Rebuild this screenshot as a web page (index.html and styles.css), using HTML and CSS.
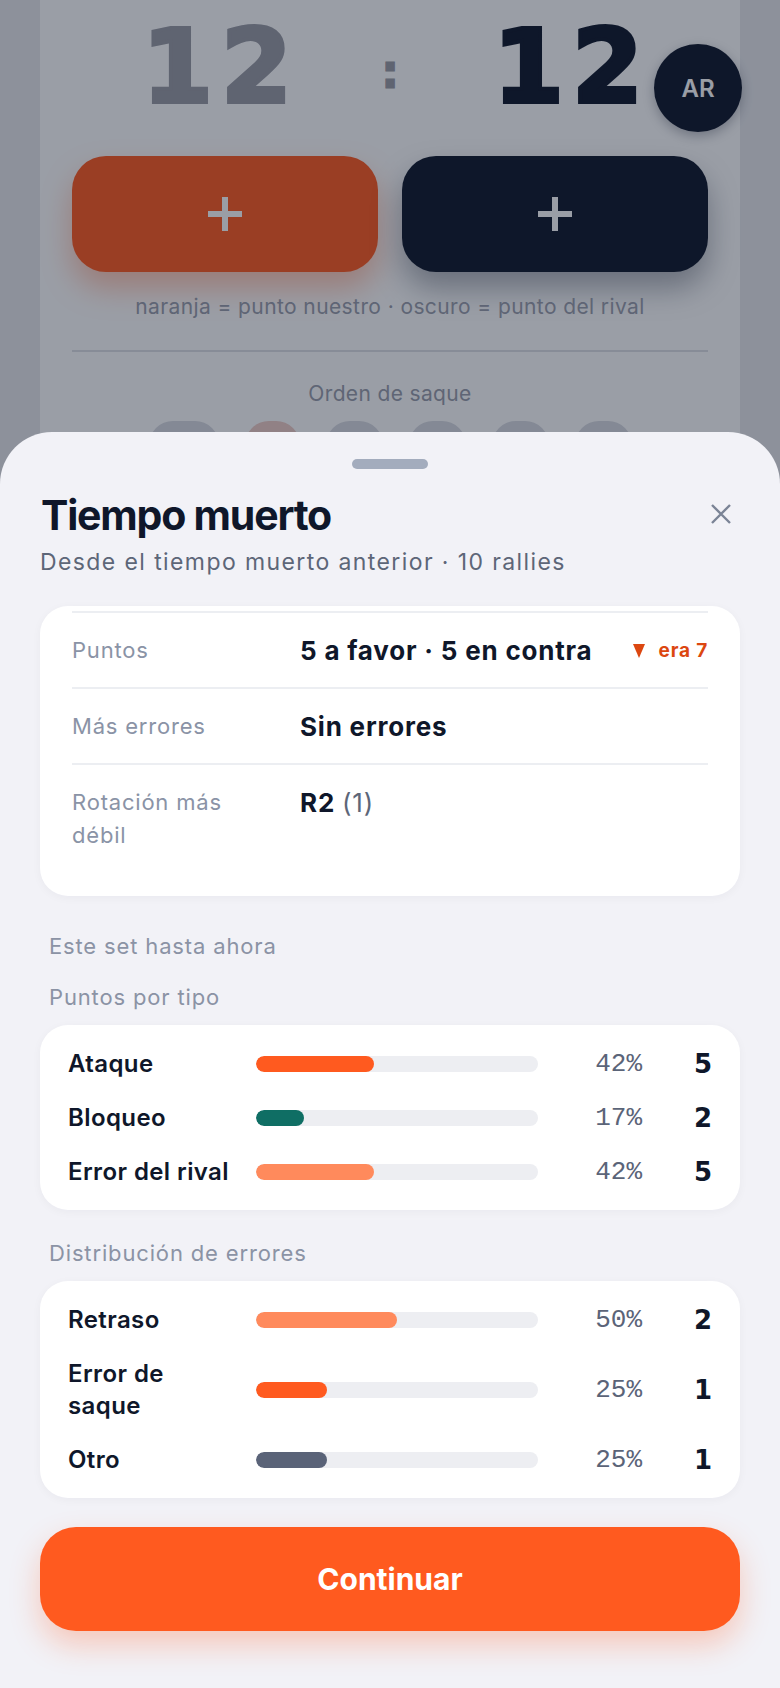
FILE: index.html
```html
<!DOCTYPE html>
<html lang="es">
<head>
    <meta charset="UTF-8">
    <meta name="viewport" content="width=device-width, initial-scale=1.0">
    <title>Tiempo muerto</title>
    <link rel="stylesheet" href="styles.css">
</head>
<body>
    <div class="app">
        <div class="board">
            <div class="score">
                <span class="score-num ours">12</span>
                <span class="colon">:</span>
                <span class="score-num theirs">12</span>
                <span class="badge">AR</span>
            </div>

            <div class="point-btns">
                <button class="point ours">
                    <svg viewBox="0 0 40 40" width="40" height="40"><path d="M20 3v34M3 20h34"/></svg>
                </button>
                <button class="point theirs">
                    <svg viewBox="0 0 40 40" width="40" height="40"><path d="M20 3v34M3 20h34"/></svg>
                </button>
            </div>
            <p class="hint">naranja = punto nuestro · oscuro = punto del rival</p>

            <div class="divider"></div>

            <p class="hint serve-label">Orden de saque</p>
            <div class="serve-order">
                <span class="pill wide"></span>
                <span class="pill active"></span>
                <span class="pill"></span>
                <span class="pill"></span>
                <span class="pill"></span>
                <span class="pill"></span>
            </div>
        </div>

        <div class="scrim"></div>

        <section class="sheet">
            <div class="handle"></div>
            <div class="sheet-head">
                <h2 class="title">Tiempo muerto</h2>
                <button class="close" aria-label="Cerrar">
                    <svg viewBox="0 0 22 22" width="22" height="22"><path d="M2 2l18 18M20 2L2 20"/></svg>
                </button>
            </div>
            <p class="subtitle">Desde el tiempo muerto anterior · 10 rallies</p>

            <div class="card summary">
                <div class="summary-row">
                    <span class="label">Puntos</span>
                    <span class="value">5 a favor · 5 en contra</span>
                    <span class="delta">
                        <svg viewBox="0 0 12 14" width="12" height="14"><path d="M0 0h12L6 14z"/></svg>
                        era 7
                    </span>
                </div>
                <div class="summary-row">
                    <span class="label">Más errores</span>
                    <span class="value">Sin errores</span>
                </div>
                <div class="summary-row">
                    <span class="label">Rotación más débil</span>
                    <span class="value">R2 <span class="muted">(1)</span></span>
                </div>
            </div>

            <p class="section-label first">Este set hasta ahora</p>
            <p class="section-label">Puntos por tipo</p>
            <div class="card bars">
                <div class="bar-row">
                    <span class="bar-label">Ataque</span>
                    <div class="track"><div class="fill attack" style="width: 42%"></div></div>
                    <span class="pct">42%</span>
                    <span class="count">5</span>
                </div>
                <div class="bar-row">
                    <span class="bar-label">Bloqueo</span>
                    <div class="track"><div class="fill block" style="width: 17%"></div></div>
                    <span class="pct">17%</span>
                    <span class="count">2</span>
                </div>
                <div class="bar-row">
                    <span class="bar-label">Error del rival</span>
                    <div class="track"><div class="fill soft" style="width: 42%"></div></div>
                    <span class="pct">42%</span>
                    <span class="count">5</span>
                </div>
            </div>

            <p class="section-label gap">Distribución de errores</p>
            <div class="card bars">
                <div class="bar-row">
                    <span class="bar-label">Retraso</span>
                    <div class="track"><div class="fill soft" style="width: 50%"></div></div>
                    <span class="pct">50%</span>
                    <span class="count">2</span>
                </div>
                <div class="bar-row">
                    <span class="bar-label">Error de saque</span>
                    <div class="track"><div class="fill attack" style="width: 25%"></div></div>
                    <span class="pct">25%</span>
                    <span class="count">1</span>
                </div>
                <div class="bar-row">
                    <span class="bar-label">Otro</span>
                    <div class="track"><div class="fill other" style="width: 25%"></div></div>
                    <span class="pct">25%</span>
                    <span class="count">1</span>
                </div>
            </div>

            <button class="continue">Continuar</button>
        </section>
    </div>
</body>
</html>
```

FILE: styles.css
```css
body {
    margin: 0;
    font-family: Inter, "Noto Sans", sans-serif;
    background-color: #e8e9ed;
    color: #0f172a;
}
.app {
    position: relative;
    width: 780px;
    height: 1688px;
    overflow: hidden;
}

/* match screen underneath */
.board {
    margin: 0 40px;
    padding: 6px 32px 0;
    height: 1688px;
    background: #ffffff;
}
.score {
    position: relative;
    display: grid;
    grid-template-columns: 1fr 40px 1fr;
    align-items: start;
    justify-items: center;
}
.score-num {
    font-family: "DejaVu Sans", sans-serif;
    font-weight: bold;
    font-size: 102px;
    line-height: 122px;
    letter-spacing: 8px;
    color: #0f172a;
    -webkit-text-stroke: 4px #0f172a;
}
.score-num.ours {
    color: #9a9ba4;
    -webkit-text-stroke-color: #9a9ba4;
}
.score-num.theirs {
    margin-left: 26px;
}
.colon {
    margin-top: 41px;
    font-family: "DejaVu Sans", sans-serif;
    font-weight: bold;
    font-size: 48px;
    line-height: 48px;
    color: #9a9ba4;
    -webkit-text-stroke: 1px #9a9ba4;
}
.badge {
    position: absolute;
    left: 582px;
    top: 38px;
    width: 88px;
    height: 88px;
    border-radius: 50%;
    background: #0f172a;
    color: #ffffff;
    font-size: 24px;
    font-weight: 600;
    display: flex;
    align-items: center;
    justify-content: center;
    box-shadow: 0 4px 12px rgba(15, 23, 42, 0.3);
}
.point-btns {
    display: grid;
    grid-template-columns: 1fr 1fr;
    gap: 24px;
    margin-top: 28px;
}
.point {
    height: 116px;
    border: none;
    border-radius: 34px;
    display: flex;
    align-items: center;
    justify-content: center;
}
.point svg {
    stroke: #ffffff;
    stroke-width: 6;
    fill: none;
}
.point.ours {
    background: #ff5a1f;
    box-shadow: 0 16px 30px rgba(255, 90, 31, 0.35);
}
.point.theirs {
    background: #0f172a;
    box-shadow: 0 16px 30px rgba(15, 23, 42, 0.35);
}
.hint {
    margin: 22px 0 0;
    text-align: center;
    font-size: 21px;
    line-height: 26px;
    letter-spacing: 0.4px;
    color: #999dab;
}
.divider {
    height: 2px;
    background: #dfe1e6;
    margin-top: 30px;
}
.serve-label {
    margin-top: 29px;
    letter-spacing: 0.35px;
}
.serve-order {
    display: flex;
    justify-content: center;
    gap: 26px;
    margin-top: 14px;
}
.pill {
    width: 57px;
    height: 48px;
    border-radius: 24px;
    background: #d9dbe2;
}
.pill.wide {
    width: 70px;
}
.pill.active {
    width: 55px;
    background: #f0cdc6;
}
.scrim {
    position: absolute;
    inset: 0;
    background: rgba(15, 23, 42, 0.42);
}

/* timeout sheet */
.sheet {
    position: absolute;
    left: 0;
    right: 0;
    top: 432px;
    bottom: 0;
    background: #f2f2f7;
    border-radius: 52px 52px 0 0;
    padding: 27px 40px 0;
}
.handle {
    width: 76px;
    height: 10px;
    border-radius: 5px;
    background: #a3acbd;
    margin: 0 auto 22px;
}
.sheet-head {
    display: flex;
    justify-content: space-between;
    align-items: flex-start;
}
.title {
    margin: 0 0 0 1px;
    font-size: 41px;
    line-height: 48px;
    font-weight: 700;
    letter-spacing: -1.2px;
    color: #0f172a;
}
.close {
    background: none;
    border: none;
    padding: 0;
    margin: 12px 8px 0 0;
    width: 22px;
    height: 22px;
}
.close svg {
    display: block;
    stroke: #7b8496;
    stroke-width: 2.4;
    fill: none;
}
.subtitle {
    margin: 8px 0 0;
    font-size: 23px;
    line-height: 30px;
    letter-spacing: 1.4px;
    color: #5d6678;
}
.card {
    background: #ffffff;
    border-radius: 28px;
    box-shadow: 0 2px 10px rgba(15, 23, 42, 0.04);
}
.summary {
    margin-top: 29px;
    padding: 5px 32px 24px;
}
.summary-row {
    display: grid;
    grid-template-columns: 228px 1fr auto;
    align-items: start;
    border-top: 2px solid #eceef2;
    padding: 21px 0 20px;
    line-height: 33px;
}
.label {
    font-size: 22px;
    letter-spacing: 0.8px;
    color: #8a93a6;
    padding-right: 60px;
}
.value {
    font-size: 26px;
    font-weight: 700;
    letter-spacing: 0.8px;
    color: #0f172a;
}
.muted {
    font-weight: 400;
    color: #5d6678;
}
.delta {
    display: flex;
    align-items: center;
    gap: 14px;
    font-size: 19px;
    font-weight: 700;
    letter-spacing: 0.8px;
    color: #dc4710;
}
.delta svg {
    fill: #dc4710;
}
.section-label {
    margin: 21px 0 0;
    padding-left: 9px;
    font-size: 22px;
    line-height: 30px;
    letter-spacing: 0.85px;
    color: #8b93a5;
}
.section-label.first {
    margin-top: 35px;
}
.section-label.gap {
    margin-top: 28px;
}
.bars {
    margin-top: 13px;
    padding: 23px 28px 22px;
    display: grid;
    gap: 22px;
}
.bar-row {
    display: grid;
    grid-template-columns: 172px 282px 88px 54px;
    column-gap: 16px;
    align-items: center;
}
.bar-label {
    padding-right: 4px;
    font-size: 24px;
    font-weight: 600;
    line-height: 32px;
    letter-spacing: 0.4px;
    color: #0f172a;
}
.track {
    height: 16px;
    border-radius: 8px;
    background: #edeef2;
    overflow: hidden;
}
.fill {
    height: 100%;
    border-radius: 8px;
}
.fill.attack { background: #ff5a1f; }
.fill.block { background: #0f6e64; }
.fill.soft { background: #ff8a5c; }
.fill.other { background: #5a6378; }
.pct {
    text-align: right;
    font-family: "Liberation Mono", monospace;
    font-size: 26px;
    color: #5b6478;
}
.count {
    text-align: right;
    font-family: "DejaVu Sans", sans-serif;
    font-size: 26px;
    font-weight: bold;
    color: #0f172a;
}
.continue {
    display: block;
    width: 100%;
    height: 104px;
    margin-top: 29px;
    border: none;
    border-radius: 36px;
    background: #ff5a1f;
    color: #ffffff;
    font-family: Inter, sans-serif;
    font-size: 30px;
    font-weight: 700;
    box-shadow: 0 14px 30px rgba(255, 90, 31, 0.28);
}
```
